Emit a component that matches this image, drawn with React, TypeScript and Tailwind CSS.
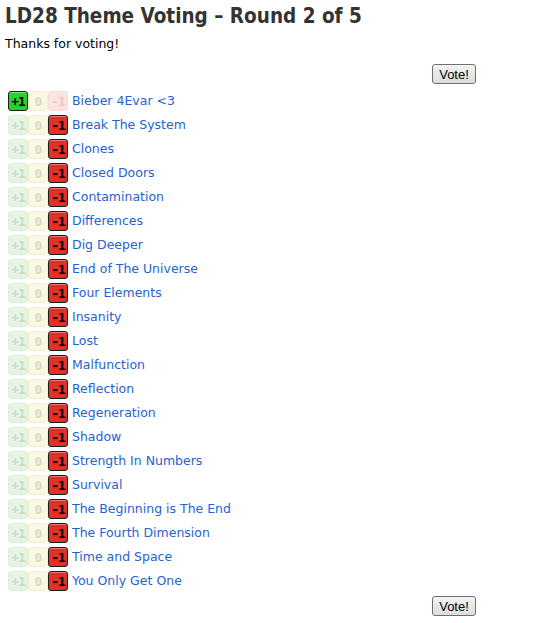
import React from "react";

type Vote = 1 | 0 | -1;

const themes: { name: string; vote: Vote }[] = [
  { name: "Bieber 4Evar <3", vote: 1 },
  { name: "Break The System", vote: -1 },
  { name: "Clones", vote: -1 },
  { name: "Closed Doors", vote: -1 },
  { name: "Contamination", vote: -1 },
  { name: "Differences", vote: -1 },
  { name: "Dig Deeper", vote: -1 },
  { name: "End of The Universe", vote: -1 },
  { name: "Four Elements", vote: -1 },
  { name: "Insanity", vote: -1 },
  { name: "Lost", vote: -1 },
  { name: "Malfunction", vote: -1 },
  { name: "Reflection", vote: -1 },
  { name: "Regeneration", vote: -1 },
  { name: "Shadow", vote: -1 },
  { name: "Strength In Numbers", vote: -1 },
  { name: "Survival", vote: -1 },
  { name: "The Beginning is The End", vote: -1 },
  { name: "The Fourth Dimension", vote: -1 },
  { name: "Time and Space", vote: -1 },
  { name: "You Only Get One", vote: -1 },
];

function VoteBox({ label, active, kind }: { label: string; active: boolean; kind: Vote }) {
  let cls = "";
  if (kind === 1) {
    cls = active
      ? "bg-[#2ecc2e] border-[#1c1c1c] text-black shadow-[inset_0_1px_0_#7ae87a]"
      : "bg-[#e6f4e4] border-[#e0ecdc] text-[#c4dcc2]";
  } else if (kind === 0) {
    cls = active
      ? "bg-[#f4f0a0] border-[#1c1c1c] text-black"
      : "bg-[#faf8e2] border-[#f0eed8] text-[#dad8c0]";
  } else {
    cls = active
      ? "bg-[#e0302a] border-[#1c1c1c] text-black shadow-[inset_0_1px_0_#f07a70]"
      : "bg-[#fbe4e2] border-[#f4dad8] text-[#eac8c8]";
  }
  return (
    <span
      className={`flex h-[20px] w-[20px] items-center justify-center rounded-[3px] border text-[13px] font-bold leading-none tracking-[-1px] slashed-zero ${cls}`}
      style={{ fontFamily: '"DejaVu Sans Mono", monospace' }}
    >
      {label}
    </span>
  );
}

function VoteButton() {
  return (
    <div className="flex w-[471px] justify-end">
      <button className="h-[20px] w-[44px] rounded-[3px] border border-[#707070] bg-gradient-to-b from-[#f4f4f4] to-[#dcdcdc] text-[13px] leading-none text-black font-['Liberation_Sans',Arial,sans-serif]">
        Vote!
      </button>
    </div>
  );
}

export default function App() {
  return (
    <div className="min-h-screen bg-white px-[5px] pt-[2px] font-['DejaVu_Sans',Verdana,sans-serif]">
      <h1
        className="text-[20.5px] font-bold leading-[28px] text-[#333]"
        style={{ fontFamily: '"DejaVu Sans Condensed", "Roboto", sans-serif', fontStretch: "condensed" }}
      >
        LD28 Theme Voting – Round 2 of 5
      </h1>
      <p className="mt-[6px] text-[12.5px] leading-[16px] text-black">Thanks for voting!</p>
      <div className="mt-[12px]">
        <VoteButton />
      </div>
      <ul className="mt-[7px] flex flex-col gap-[4px] pl-[3px]">
        {themes.map((t) => (
          <li key={t.name} className="flex h-[20px] items-center">
            <VoteBox label="+1" kind={1} active={t.vote === 1} />
            <VoteBox label="0" kind={0} active={t.vote === 0} />
            <VoteBox label="-1" kind={-1} active={t.vote === -1} />
            <a href="#" className="ml-[4px] text-[12.5px] text-[#2463d1]">
              {t.name}
            </a>
          </li>
        ))}
      </ul>
      <div className="mt-[5px]">
        <VoteButton />
      </div>
    </div>
  );
}
